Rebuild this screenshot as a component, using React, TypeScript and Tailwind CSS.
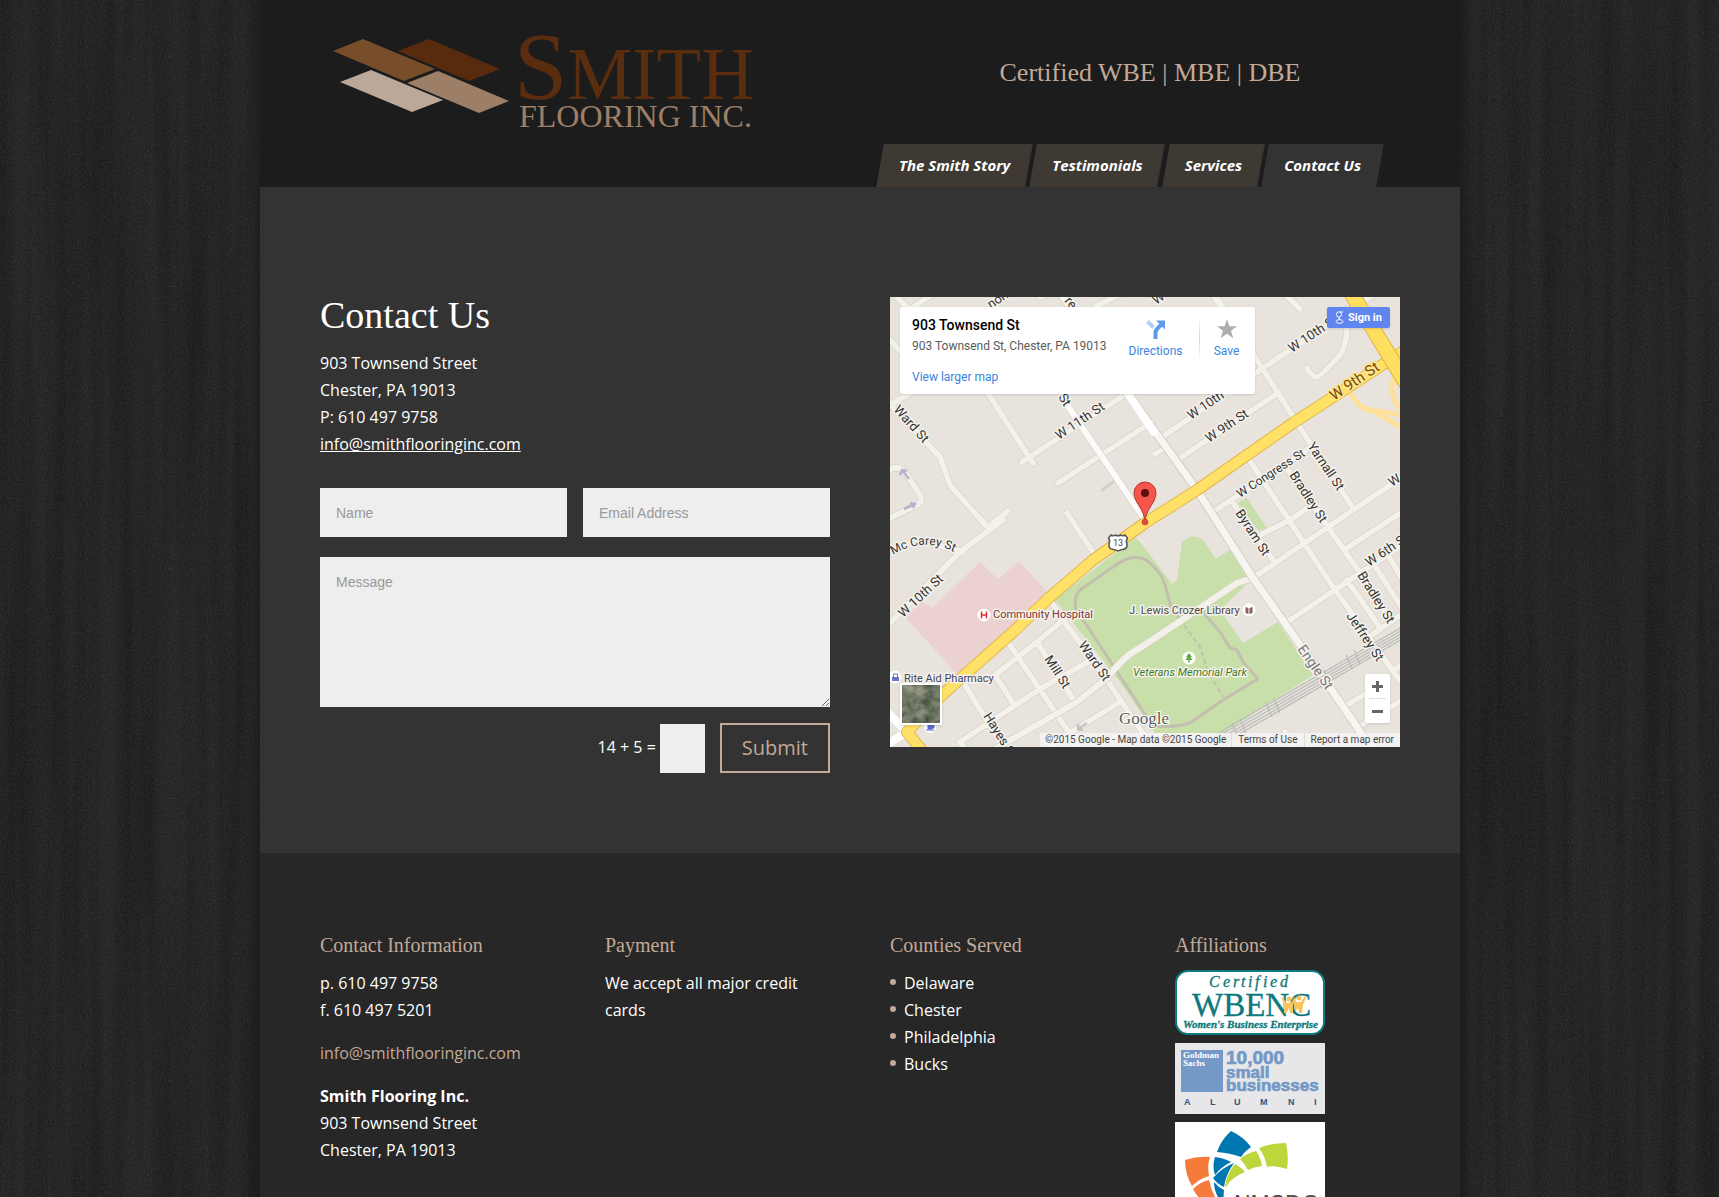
import React from "react";

const NAV = [
  { label: "The Smith Story", active: false },
  { label: "Testimonials", active: false },
  { label: "Services", active: false },
  { label: "Contact Us", active: true },
];

const COUNTIES = ["Delaware", "Chester", "Philadelphia", "Bucks"];

const FIELD =
  "block w-full rounded-none border-0 bg-[#eeeeee] px-4 font-['Liberation_Sans',sans-serif] text-sm text-[#666666] outline-none placeholder:text-[#999999]";
const HEADING =
  "font-['Liberation_Serif',serif] text-xl leading-6 text-[#c2a998] mb-[13px]";

function WoodTexture() {
  return (
    <svg aria-hidden="true" className="absolute inset-0 h-full w-full" preserveAspectRatio="none">
      <defs>
        <filter id="streaks" x="0" y="0" width="100%" height="100%">
          <feTurbulence type="fractalNoise" baseFrequency="0.06 0.002" numOctaves="3" seed="11" />
          <feColorMatrix values="0 0 0 0 0  0 0 0 0 0  0 0 0 0 0  0.45 0 0 0 -0.13" />
        </filter>
        <filter id="grain" x="0" y="0" width="100%" height="100%">
          <feTurbulence type="fractalNoise" baseFrequency="0.7 0.5" numOctaves="2" seed="4" />
          <feColorMatrix values="0 0 0 0 0.5  0 0 0 0 0.5  0 0 0 0 0.47  0.24 0 0 0 -0.1" />
        </filter>
      </defs>
      <rect width="100%" height="100%" filter="url(#streaks)" />
      <rect width="100%" height="100%" filter="url(#grain)" />
    </svg>
  );
}

function Logo() {
  return (
    <svg width="424" height="100" viewBox="0 0 424 100" role="img" aria-label="Smith Flooring Inc.">
      <polygon points="1,23 31,11 103,41 72,53" fill="#774e29" />
      <polygon points="66,23 97,11 168,41 137,53" fill="#582b0e" />
      <polygon points="8,54 39,42 111,72 80,84" fill="#bca899" />
      <polygon points="75,55 106,43 177,73 147,85" fill="#9d7f68" />
      <g fontFamily="'Liberation Serif', serif">
        <text x="182" y="71" fontSize="96" fill="#5a2d0f">
          S<tspan fontSize="73">MITH</tspan>
        </text>
        <text x="187" y="99" fontSize="32" fill="#9d7f68">FLOORING INC.</text>
      </g>
    </svg>
  );
}

type Label = { t: string; x: number; y: number; r: number; c?: string; s?: number; halo?: string };

const LABELS: Label[] = [
  { t: "non", x: 101, y: 12, r: -34 },
  { t: "re", x: 174, y: 4, r: 52 },
  { t: "W", x: 266, y: 8, r: -34 },
  { t: "W 11th St", x: 169, y: 143, r: -34 },
  { t: "Ward St", x: 3, y: 113, r: 48 },
  { t: "St", x: 168, y: 100, r: 58 },
  { t: "W 10th St", x: 301, y: 123, r: -34 },
  { t: "W 9th St", x: 319, y: 146, r: -34 },
  { t: "W 10th St", x: 402, y: 56, r: -34 },
  { t: "W 9th St", x: 444, y: 104, r: -34, c: "#7a4708", s: 15, halo: "#ffe88f" },
  { t: "W Congress St", x: 350, y: 201, r: -33, s: 12 },
  { t: "Yarnall St", x: 417, y: 149, r: 56 },
  { t: "Bradley St", x: 399, y: 178, r: 57 },
  { t: "Byram St", x: 345, y: 216, r: 57 },
  { t: "W", x: 502, y: 190, r: -34 },
  { t: "W 10th St", x: 13, y: 321, r: -43 },
  { t: "Hayes St", x: 93, y: 419, r: 58 },
  { t: "Mill St", x: 154, y: 362, r: 57 },
  { t: "Ward St", x: 188, y: 348, r: 55 },
  { t: "Engle St", x: 407, y: 352, r: 55, c: "#777777", s: 14 },
  { t: "Jeffrey St", x: 456, y: 319, r: 56 },
  { t: "Bradley St", x: 467, y: 278, r: 58 },
  { t: "W 6th St", x: 479, y: 270, r: -34 },
];

const STREETS =
  "M7 0L24 18M20 12L43 -3M-2 41L12 56M-2 105L50 160L60 188L98 231M3 106L22 95M90 221L98 230L118 214M113 223L70 255L-2 328M40 246L73 255M-2 174Q7 167 15 175L30 198Q34 204 27 208L-2 222M97 95L143 166M132 165L245 91M168 186L262 125M275 138L370 73L495 -10M265 157L275 151M290 161L385 98M457 25Q458 45 450 58Q430 80 427 80Q420 79 417 71M325 -2L367 63L407 126L463 211M323 -2Q330 10 336 12M323 215L424 148M343 206L383 263M358 161L443 290L510 384M398 173L468 273L500 322M457 283L491 332M483 266L512 311M497 256L512 282M370 238L400 223L425 206M363 281L512 180M397 325L512 248M457 251L512 215M483 337L512 317M503 373L512 368M457 408L480 394M467 431L512 403M177 216L205 258M160 303L173 323L217 383L262 450M173 323L147 345L105 378L123 406M118 345L190 452M147 345L185 405M198 365L150 392L70 445M230 405L173 440L160 450M75 388L113 450M70 446L74 450M395 435L405 450M150 0L160 -4M205 10L230 -3M395 -3L410 12";

function MapCanvas() {
  return (
    <svg
      className="absolute inset-0 h-full w-full"
      viewBox="0 0 510 450"
      preserveAspectRatio="xMidYMid slice"
      role="img"
      aria-label="Street map around 903 Townsend St"
    >
      <rect width="510" height="450" fill="#e8e4dd" />
      <path d="M15 320L32 305L42 311L63 291L90 265L108 282L129 264L160 298L68 378Z" fill="#ebd1cf" />
      <path
        d="M245 240L165 303L230 385L265 436L333 436L423 378L388 325L353 346L330 313L363 281L340 253L326 262L313 243Q302 235 292 245L287 283L282 287L250 245Z"
        fill="#c9dfaa"
      />
      <path d="M348 206L357 201L378 233L375 236L367 232Z" fill="#c9dfaa" />
      <g fill="none" strokeLinecap="round" strokeLinejoin="round">
        <path
          d="M262 428L186 312Q183 300 190 293L223 270Q245 253 260 266Q273 278 275 288L282 313L292 324M312 314L330 335L340 351L347 353L353 365L368 382L333 403L300 426Q285 431 262 429"
          stroke="#c3bfae"
          strokeWidth="3"
        />
        <path d="M294 328L310 350L317 372L333 400" stroke="#c3bfae" strokeWidth="2" strokeDasharray="5 3" strokeLinecap="butt" />
        <path d={STREETS} stroke="#d9d4ca" strokeWidth="7" />
        <path d={STREETS} stroke="#f4f1ea" strokeWidth="5.500" />
        <path d="M363 281L347 286L310 311L250 351Q235 358 217 381L187 405L105 452" stroke="#d9d4ca" strokeWidth="7.500" />
        <path d="M363 281L347 286L310 311L250 351Q235 358 217 381L187 405L105 452" stroke="#f4f1ea" strokeWidth="6" />
        <path d="M212 193L223 185" stroke="#d3cfc5" strokeWidth="3" />
        <path d="M177 108L255 223" stroke="#d9d4ca" strokeWidth="7.500" />
        <path d="M177 108L255 223" stroke="#fcfbf9" strokeWidth="6" />
        <path d="M172 -2L238 97L307 193L363 281L437 386L482 452" stroke="#d5d0c6" strokeWidth="9" />
        <path d="M172 -2L238 97L307 193L363 281L437 386L482 452" stroke="#f7f5f0" strokeWidth="7" />
        <path d="M238 97L264 135" stroke="#ffffff" strokeWidth="8" />
        <path d="M-4 414L17 435L-4 448" stroke="#ffffff" strokeWidth="8" />
        <path
          d="M318 442L512 330M322 443L512 333M326 444L512 336M330 445L512 339M334 446L512 342"
          stroke="#bdbdb9"
          strokeWidth="1.300"
          strokeLinecap="butt"
        />
        <path
          d="M342 426l6 14M350 422l6 14M376 406l6 14M384 402l6 14M426 377l6 14M434 373l6 14M456 358l6 14M464 353l6 14"
          stroke="#b5b5b1"
          strokeWidth="1"
        />
        <path d="M458 92Q470 115 485 114Q500 115 512 119M480 112Q498 122 512 131M504 80Q497 98 512 114" stroke="#ffe09a" strokeWidth="5" />
        <path d="M34 456L17 435L52 398L123 335L160 300L203 263L255 226L307 193L403 126L457 91L512 55" stroke="#e3b64a" strokeWidth="12" />
        <path d="M34 456L17 435L52 398L123 335L160 300L203 263L255 226L307 193L403 126L457 91L512 55" stroke="#ffe168" strokeWidth="10" />
        <path d="M460 -6L516 86" stroke="#e3b64a" strokeWidth="16" />
        <path d="M460 -6L516 86" stroke="#ffdf60" strokeWidth="14" />
      </g>
      <g fill="none" stroke="#b4b6cc" strokeWidth="2.500">
        <path d="M19 182L12 173M10 178L12 173L17 174" />
        <path d="M14 212L25 207M20 206L25 207L23 211" />
        <path d="M197 426L188 432M188 427L188 432L193 433" stroke="#c2c2c2" />
      </g>
      <g
        fontFamily="Roboto, sans-serif"
        stroke="#f5f2ec"
        strokeWidth="3"
        strokeLinejoin="round"
        paintOrder="stroke"
      >
        {LABELS.map((l, i) => (
          <text
            key={i}
            transform={`translate(${l.x} ${l.y}) rotate(${l.r})`}
            fontSize={l.s ?? 13}
            fill={l.c ?? "#333333"}
            stroke={l.halo ?? "#f5f2ec"}
          >
            {l.t}
          </text>
        ))}
        <path id="mc-carey" d="M3 258Q34 238 68 257" fill="none" stroke="none" />
        <text fontSize="12" fill="#333333">
          <textPath href="#mc-carey">Mc Carey St</textPath>
        </text>
        <text x="103" y="321" fontSize="11" fill="#7c3434">Community Hospital</text>
        <text x="14" y="385" fontSize="11" fill="#3f4263">Rite Aid Pharmacy</text>
        <text x="239" y="317" fontSize="11" fill="#4f4a45">J. Lewis Crozer Library</text>
        <text x="243" y="379" fontSize="11" fontStyle="italic" fill="#3b7d24">Veterans Memorial Park</text>
      </g>
      <circle cx="94" cy="318" r="6.500" fill="#ffffff" />
      <path d="M91.500 314.500v7M96.500 314.500v7M91.500 318h5" stroke="#d9362c" strokeWidth="1.500" fill="none" />
      <circle cx="5" cy="380" r="6.500" fill="#ffffff" />
      <path d="M2 380h7v4H2z" fill="#6974c4" />
      <path d="M3.500 380v-3h4v3M4 382h3" fill="none" stroke="#6974c4" />
      <circle cx="40" cy="430" r="6" fill="#ffffff" />
      <path d="M36 433h8M38 427h4v5h-4zM42 428h2v3h-2" fill="#5a69c9" stroke="#5a69c9" />
      <circle cx="359" cy="313" r="6.500" fill="#ffffff" />
      <path d="M355.500 310l3 1v6l-3-1zM362.500 310l-3 1v6l3-1z" fill="#8a6258" />
      <circle cx="299" cy="361" r="6.500" fill="#ffffff" />
      <path d="M299 356l3 4h-1.500l2 3h-2.800v2.500h-1.400v-2.500h-2.800l2-3H296z" fill="#5faa33" />
      <path
        d="M221 238q2.500 1.500 4 0q3 1.500 6 0q1.500 1.500 4 0l2.500 3q-2 3-.5 6q.5 5-4.500 5.500q-3 .5-4.500 1.500q-1.500-1-4.500-1.500q-5-.5-4.500-5.500q1.500-3-.5-6z"
        fill="#ffffff"
        stroke="#555555"
        strokeWidth="1.500"
      />
      <text x="228" y="249" fontSize="9" textAnchor="middle" fontFamily="Roboto, sans-serif" fill="#444444">13</text>
      <path
        d="M255 225C254 211 244 206 244 196A11 11 0 0 1 266 196C266 206 256 211 255 225Z"
        fill="#f5554a"
        stroke="#b53a32"
        strokeWidth="1"
      />
      <circle cx="255" cy="196" r="4" fill="#5c100c" />
      <circle cx="255" cy="225" r="3" fill="#e2483d" stroke="#b53a32" strokeWidth="0.600" />
      <text x="229" y="427" fontSize="17" fontFamily="'Liberation Serif', serif" fill="#5c5c5c" stroke="#ffffff" strokeWidth="2" paintOrder="stroke">
        Google
      </text>
    </svg>
  );
}

function SatelliteThumb() {
  return (
    <svg viewBox="0 0 38 38" className="h-full w-full" aria-hidden="true">
      <defs>
        <filter id="sat" x="0" y="0" width="100%" height="100%" colorInterpolationFilters="sRGB">
          <feTurbulence type="fractalNoise" baseFrequency="0.09" numOctaves="5" seed="8" />
          <feColorMatrix values="0.6 0 0 0 0.13  0.5 0 0 0 0.21  0.5 0 0 0 0.14  0 0 0 0 1" />
        </filter>
      </defs>
      <rect width="38" height="38" filter="url(#sat)" />
    </svg>
  );
}

function MapPanel() {
  return (
    <div className="relative h-[450px] overflow-hidden font-[Roboto,sans-serif]">
      <MapCanvas />
      <div className="absolute left-[10px] top-[10px] flex h-[87px] w-[355px] rounded-xs bg-white pl-3 pt-[9px] shadow">
        <div className="w-[207px] text-xs">
          <p className="text-sm leading-[18px] font-medium text-black">903 Townsend St</p>
          <p className="leading-6 whitespace-nowrap text-[#5b5b5b]">903 Townsend St, Chester, PA 19013</p>
          <a href="#map" className="mt-[11px] block leading-4 text-[#3a84df]">View larger map</a>
        </div>
        <a href="#directions" className="flex w-[73px] flex-col items-center pt-[3px] text-xs leading-4 text-[#3a84df]">
          <svg width="20" height="20" viewBox="0 0 20 20" className="mb-1" aria-hidden="true">
            <path d="M1.500 2.500l6 6" stroke="#b3d0f5" strokeWidth="4" />
            <path d="M9.500 20v-6q0-3 3-5.500l2.500-2.500" stroke="#5b9be8" strokeWidth="4" fill="none" />
            <path d="M10 1.500h9v9z" fill="#5b9be8" />
          </svg>
          Directions
        </a>
        <div className="ml-[7px] h-11 w-px bg-linear-to-b from-transparent via-gray-300 to-transparent" />
        <a href="#save" className="flex w-[53px] flex-col items-center pt-[3px] text-xs leading-4 text-[#3a84df]">
          <svg width="20" height="20" viewBox="0 0 20 20" className="mb-1" aria-hidden="true">
            <path d="M10 0l2.400 7.200H20l-6 4.600 2.300 7.400L10 14.700l-6.300 4.500L6 11.800 0 7.200h7.600z" fill="#adadad" />
          </svg>
          Save
        </a>
      </div>
      <button
        type="button"
        className="absolute right-[10px] top-[10px] flex h-[21px] w-[63px] items-center gap-1 rounded-xs bg-[#6085ee] pl-2 text-[11px] font-bold whitespace-nowrap text-white shadow"
      >
        <svg width="9" height="13" viewBox="0 0 9 13" fill="none" stroke="white" aria-hidden="true">
          <ellipse cx="4" cy="3.500" rx="2.500" ry="2.700" />
          <path d="M5 1h3M5 6.200q-2 1-1 2q4 1 4 2.500q-.5 1.700-3.500 1.700t-3.500-1.700q0-1.700 3-2" />
        </svg>
        Sign in
      </button>
      <button
        type="button"
        aria-label="Satellite view"
        className="absolute bottom-[22px] left-[10px] size-[42px] border-2 border-white shadow"
      >
        <SatelliteThumb />
      </button>
      <div className="absolute right-[10px] bottom-6 flex w-[25px] flex-col items-center rounded-xs bg-white text-[#666666] shadow">
        <button type="button" aria-label="Zoom in" className="grid h-6 w-full place-items-center">
          <svg width="11" height="11" viewBox="0 0 11 11" aria-hidden="true">
            <path d="M0 5.500h11M5.500 0v11" stroke="currentColor" strokeWidth="3" />
          </svg>
        </button>
        <span className="h-px w-[17px] bg-[#e0e0e0]" />
        <button type="button" aria-label="Zoom out" className="grid h-6 w-full place-items-center">
          <svg width="11" height="11" viewBox="0 0 11 11" aria-hidden="true">
            <path d="M0 5.500h11" stroke="currentColor" strokeWidth="3" />
          </svg>
        </button>
      </div>
      <div className="absolute right-0 bottom-0 flex h-[14px] bg-[#f5f5f5]/80 text-[10px] leading-[14px] whitespace-nowrap text-[#444444]">
        <span className="px-[5px]">©2015 Google - Map data ©2015 Google</span>
        <a href="#terms" className="border-l border-[#dddddd] px-[6px]">Terms of Use</a>
        <a href="#report" className="border-l border-[#dddddd] px-[6px]">Report a map error</a>
      </div>
    </div>
  );
}

function WbencBadge() {
  return (
    <svg className="block" width="150" height="65" viewBox="0 0 150 65" role="img" aria-label="Certified WBENC Women's Business Enterprise">
      <rect x="1" y="1" width="148" height="63" rx="12" fill="#ffffff" stroke="#0d7c80" strokeWidth="2" />
      <g fill="#0b797d" stroke="#0b797d" strokeWidth="0.300" fontFamily="'Liberation Serif', serif">
        <text x="34 48 58 66 73 80 88 95 105" y="17" fontSize="16" fontStyle="italic">Certified</text>
        <text x="17" y="46" fontSize="33">WBENC</text>
        <text x="8" y="58" fontSize="11" fontStyle="italic" fontWeight="bold">Women's Business Enterprise</text>
      </g>
      <g fill="#f9c35b">
        <circle cx="114" cy="29" r="2.500" />
        <circle cx="124" cy="28" r="2.500" />
        <path d="M106 26l6 7h4l4-6 1 1-3 7v8h-3l-1-5-3 5h-2v-8z" />
        <path d="M117 27l5 5h4l4-6 1 1-3 8-1 8h-3l-1-5-3 4-1-9z" />
      </g>
    </svg>
  );
}

function GoldmanBadge() {
  return (
    <svg className="block" width="150" height="71" viewBox="0 0 150 71" role="img" aria-label="Goldman Sachs 10,000 small businesses alumni">
      <rect width="150" height="71" fill="#e7e7e9" />
      <rect x="6" y="7" width="42" height="42" fill="#7599c7" />
      <g fill="#ffffff" fontFamily="'Liberation Serif', serif" fontWeight="bold" fontSize="9">
        <text x="8" y="15">Goldman</text>
        <text x="8" y="23">Sachs</text>
      </g>
      <g fill="#7599c7" stroke="#7599c7" strokeWidth="0.700" fontFamily="'Liberation Sans', sans-serif" fontWeight="bold">
        <text x="51" y="21" fontSize="19">10,000</text>
        <text x="51" y="35" fontSize="17">small</text>
        <text x="51" y="48" fontSize="17">businesses</text>
      </g>
      <text x="9 35 59 85 113 139" y="62" fontSize="9" fontFamily="'Liberation Sans', sans-serif" fontWeight="bold" fill="#31567f">
        ALUMNI
      </text>
    </svg>
  );
}

function SupplierBadge() {
  return (
    <svg className="block" width="150" height="110" viewBox="0 0 150 110" role="img" aria-label="NMSDC">
      <rect width="150" height="110" fill="#ffffff" />
      <path d="M56 9Q69 15 76 25Q70 29 66 35Q55 31 42 30Q46 18 56 9Z" fill="#0077b0" />
      <path d="M40 35Q49 36 56 40Q46 45 40 53Q37 44 40 35Z" fill="#0077b0" />
      <path d="M38 56Q48 45 59 41Q51 52 49 65Q42 62 38 56Z" fill="#0077b0" />
      <path d="M39 60Q43 65 49 68L48 82Q39 72 39 60Z" fill="#0077b0" />
      <path d="M84 26Q96 21 111 21Q114 33 112 47Q100 43 92 45Q90 34 84 26Z" fill="#bdd63b" />
      <path d="M65 37Q72 31 81 29Q86 36 87 44Q79 45 73 48Q70 42 65 37Z" fill="#bdd63b" />
      <path d="M60 42Q66 45 70 50Q57 55 50 66Q51 52 60 42Z" fill="#bdd63b" />
      <path d="M10 38Q22 34 35 35Q32 44 34 54Q24 57 17 64Q10 52 10 38Z" fill="#f47b3a" />
      <path d="M18 67Q25 60 34 58Q36 68 41 77Q34 76 27 79Q21 73 18 67Z" fill="#f47b3a" />
      <text x="59" y="90" fontSize="23" fontFamily="'Liberation Sans', sans-serif" fill="#4b4b4d">NMSDC</text>
    </svg>
  );
}

export default function App() {
  return (
    <div className="relative h-screen overflow-hidden bg-[#252524] pl-px font-['Open_Sans',sans-serif] text-base leading-[27px] text-white">
      <WoodTexture />
      <div className="relative mx-auto max-w-[1200px] bg-[#272727] shadow-[0_0_14px_2px_#1a1a1a]">
        <header className="flex items-end justify-between bg-[#1c1c1c] pr-20 pl-[72px]">
          <a href="#home" className="self-start pt-7">
            <Logo />
          </a>
          <div className="flex flex-col">
            <p className="pt-[57px] pb-[55px] pl-10 text-center font-['Liberation_Serif',serif] text-[26px] leading-8 text-[#c2a998]">
              Certified WBE | MBE | DBE
            </p>
            <nav className="flex gap-1 text-[15px] leading-[27px] font-bold italic">
              {NAV.map((n) => (
                <a
                  key={n.label}
                  href="#page"
                  className={
                    "relative isolate px-[19px] py-2 whitespace-nowrap before:absolute before:inset-0 before:-z-10 before:-skew-x-[10deg] " +
                    (n.active ? "before:bg-[#333333]" : "before:border-r before:border-[#36322e] before:bg-[#3e3932]")
                  }
                >
                  {n.label}
                </a>
              ))}
            </nav>
          </div>
        </header>

        <main className="grid grid-cols-2 gap-[60px] bg-[#333333] px-[60px] pt-[110px] pb-20">
          <section>
            <h1 className="mb-4 font-['Liberation_Serif',serif] text-[38px] leading-[37px]">Contact Us</h1>
            <address className="not-italic">
              903 Townsend Street
              <br />
              Chester, PA 19013
              <br />
              P: 610 497 9758
              <br />
              <a href="mailto:info@smithflooringinc.com" className="underline">info@smithflooringinc.com</a>
            </address>
            <form className="mt-[30px]">
              <div className="grid grid-cols-2 gap-4">
                <input aria-label="Name" placeholder="Name" className={FIELD + " h-[49px]"} />
                <input aria-label="Email Address" type="email" placeholder="Email Address" className={FIELD + " h-[49px]"} />
              </div>
              <textarea aria-label="Message" placeholder="Message" className={FIELD + " mt-5 h-[150px] py-[15px]"} />
              <div className="mt-4 flex items-center justify-end">
                <label htmlFor="captcha" className="pr-1 pb-[2px]">14 + 5 =</label>
                <input id="captcha" className="h-[49px] w-[45px] rounded-none bg-[#eeeeee] px-2 text-[#666666]" />
                <button type="button" className="ml-[15px] h-[50px] border-2 border-[#c2a998] px-5 text-xl text-[#c2a998]">
                  Submit
                </button>
              </div>
            </form>
          </section>
          <MapPanel />
        </main>

        <footer className="grid grid-cols-4 gap-[60px] bg-[#272727] px-[60px] pt-20 pb-16">
          <section>
            <h2 className={HEADING}>Contact Information</h2>
            <p>
              p. 610 497 9758
              <br />
              f. 610 497 5201
            </p>
            <p className="mt-4">
              <a href="mailto:info@smithflooringinc.com" className="text-[#c2a998]">info@smithflooringinc.com</a>
            </p>
            <p className="mt-4">
              <strong>Smith Flooring Inc.</strong>
              <br />
              903 Townsend Street
              <br />
              Chester, PA 19013
            </p>
          </section>
          <section>
            <h2 className={HEADING}>Payment</h2>
            <p>We accept all major credit cards</p>
          </section>
          <section>
            <h2 className={HEADING}>Counties Served</h2>
            <ul>
              {COUNTIES.map((c) => (
                <li key={c} className="flex items-center gap-2 before:mb-[3px] before:size-[6px] before:rounded-full before:bg-[#c2a998]">
                  {c}
                </li>
              ))}
            </ul>
          </section>
          <section>
            <h2 className={HEADING}>Affiliations</h2>
            <div className="flex flex-col gap-2">
              <WbencBadge />
              <GoldmanBadge />
              <SupplierBadge />
            </div>
          </section>
        </footer>
      </div>
    </div>
  );
}
